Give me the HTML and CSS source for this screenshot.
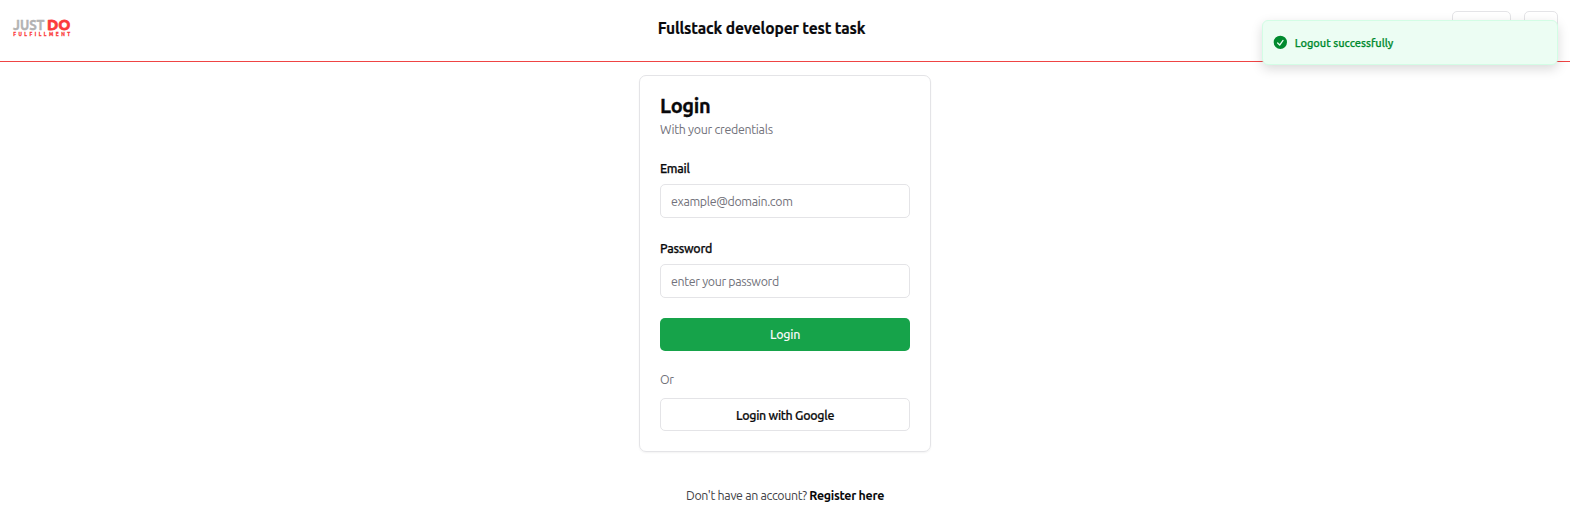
FILE: index.html
```html
<!DOCTYPE html>
<html lang="en">
<head>
<meta charset="utf-8">
<title>Login</title>
<link rel="stylesheet" href="styles.css">
</head>
<body>
<header class="header">
  <svg class="logo" viewBox="0 0 58 20" role="img" aria-label="JustDo Fulfillment">
    <text class="logo-just" x="0" y="12" textLength="31.5" lengthAdjust="spacingAndGlyphs">JUST</text>
    <text class="logo-do" x="34" y="12" textLength="23.5" lengthAdjust="spacingAndGlyphs">DO</text>
    <text class="logo-sub" x="0.2" y="17.8" textLength="57">FULFILLMENT</text>
  </svg>
  <h1 class="title">Fullstack developer test task</h1>
  <nav class="actions">
    <div class="action action-wide"></div>
    <div class="action"></div>
  </nav>
</header>
<main class="main">
  <form class="card">
    <h2 class="card-title">Login</h2>
    <p class="card-desc">With your credentials</p>
    <label class="label" for="email">Email</label>
    <input class="input" id="email" type="text" placeholder="example@domain.com">
    <label class="label label-password" for="password">Password</label>
    <input class="input" id="password" type="password" placeholder="enter your password">
    <button class="button primary" type="button">Login</button>
    <p class="or">Or</p>
    <button class="button outline" type="button">Login with Google</button>
  </form>
  <p class="register">Don't have an account? <a class="register-link">Register here</a></p>
</main>
<div class="toast" role="status">
  <svg class="toast-icon" viewBox="0 0 20 20"><path fill="currentColor" fill-rule="evenodd" d="M10 18a8 8 0 100-16 8 8 0 000 16zm3.857-9.809a.75.75 0 00-1.214-.882l-3.483 4.79-1.88-1.88a.75.75 0 10-1.06 1.061l2.5 2.5a.75.75 0 001.137-.089l4-5.5z" clip-rule="evenodd"/></svg>
  <span class="toast-text">Logout successfully</span>
</div>
</body>
</html>
```
FILE: styles.css
```css
* { box-sizing: border-box; margin: 0; }
body {
  height: 512px;
  overflow: hidden;
  background: #fff;
  color: #09090b;
  font-family: Ubuntu, "Noto Sans", sans-serif;
  font-size: 12.4px;
  letter-spacing: -.28px;
  line-height: 16.67px;
}
.header {
  display: flex;
  justify-content: space-between;
  align-items: flex-start;
  height: 62px;
  padding: 11px 12px 0 13px;
  border-bottom: 1px solid #ef4444;
}
.logo { width: 58px; height: 20px; margin-top: 7px; overflow: visible; letter-spacing: 0; }
.logo-just { font: 700 15.5px Ubuntu, "Noto Sans", sans-serif; fill: #b3b3b3; stroke: #b3b3b3; stroke-width: .4; }
.logo-do { font: 700 15.5px Ubuntu, "Noto Sans", sans-serif; fill: #fb3b3b; stroke: #fb3b3b; stroke-width: .8; }
.logo-sub { font: 700 4.8px Ubuntu, "Noto Sans", sans-serif; fill: #fb3b3b; stroke: #fb3b3b; stroke-width: .3; }
.title {
  margin: 5px 0 0;
  font-size: 15.6px;
  font-weight: 600;
  line-height: 24px;
  letter-spacing: -.14px;
  white-space: nowrap;
  -webkit-text-stroke: .2px;
}
.actions { display: flex; gap: 13px; }
.action { width: 34px; height: 34px; border: 1px solid #e4e4e7; border-radius: 5px; }
.action-wide { width: 59px; }
.main { display: flex; flex-direction: column; align-items: center; padding-top: 13px; }
.card {
  display: flex;
  flex-direction: column;
  width: 292px;
  height: 377px;
  padding: 18px 20px 0;
  border: 1px solid #e4e4e7;
  border-radius: 7px;
  box-shadow: 0 1px 2px rgba(0, 0, 0, .05);
}
.card-title { font-size: 20px; font-weight: 600; line-height: 24px; letter-spacing: -.35px; -webkit-text-stroke: .3px; }
.card-desc { margin-top: 3px; color: #71717a; }
.label { margin-top: 23px; font-weight: 500; line-height: 14px; -webkit-text-stroke: .25px; }
.label-password { margin-top: 23px; }
.input {
  height: 34px;
  margin-top: 9px;
  padding: 1px 10px 0;
  border: 1px solid #e4e4e7;
  border-radius: 5px;
  background: #fff;
  font: inherit;
  letter-spacing: -.33px;
}
.input::placeholder { color: #71717a; opacity: 1; }
.button { height: 33px; border: 0; border-radius: 5px; font: inherit; font-weight: 500; letter-spacing: inherit; color: inherit; }
.primary { margin-top: 20px; padding-top: 1px; background: #16a34a; color: #fafafa; }
.or { margin-top: 20px; color: #71717a; }
.outline { margin-top: 11px; padding-top: 1px; border: 1px solid #e4e4e7; background: #fff; -webkit-text-stroke: .2px; }
.register { margin-top: 35px; white-space: nowrap; color: #3f3f46; letter-spacing: -.32px; }
.register-link { font-weight: 600; color: #09090b; letter-spacing: -.29px; }
.toast {
  position: absolute;
  top: 20px;
  left: 1262px;
  display: flex;
  align-items: center;
  gap: 6px;
  width: 296px;
  height: 45px;
  padding: 0 9px;
  border: 1px solid #d3fde5;
  border-radius: 6px;
  background: #ecfdf3;
  color: #008a2e;
  box-shadow: 0 4px 12px rgba(0, 0, 0, .15);
  font-size: 11px;
  font-weight: 500;
  letter-spacing: 0;
}
.toast-icon { width: 16.67px; height: 16.67px; }
.toast-text { padding-top: 2px; -webkit-text-stroke: .25px; }
```
